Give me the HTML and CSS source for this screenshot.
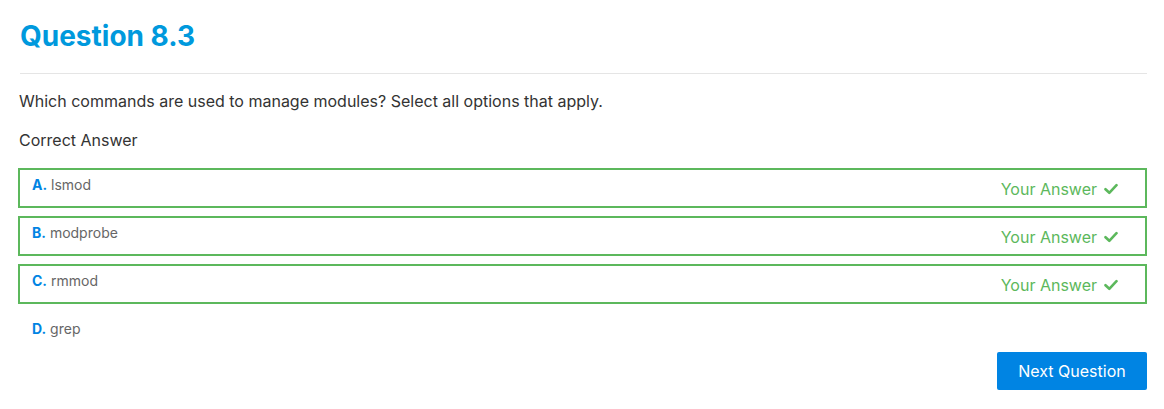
FILE: index.html
```html
<!DOCTYPE html>
<html>
<head>
<meta charset="utf-8">
<link rel="stylesheet" href="styles.css">
</head>
<body>
<div class="page">
  <h1 class="title">Question 8.3</h1>
  <hr class="rule">
  <p class="question">Which commands are used to manage modules? Select all options that apply.</p>
  <p class="correct">Correct Answer</p>
  <ul class="options">
    <li class="option selected">
      <span class="label"><b class="letter">A.</b> lsmod</span>
      <span class="yours">Your Answer <svg class="check" width="14" height="12" viewBox="0 0 14 12"><polyline points="1.5,6.2 5.3,9.8 12.5,2.2" fill="none" stroke="currentColor" stroke-width="2.6" stroke-linecap="round" stroke-linejoin="round"/></svg></span>
    </li>
    <li class="option selected">
      <span class="label"><b class="letter">B.</b> modprobe</span>
      <span class="yours">Your Answer <svg class="check" width="14" height="12" viewBox="0 0 14 12"><polyline points="1.5,6.2 5.3,9.8 12.5,2.2" fill="none" stroke="currentColor" stroke-width="2.6" stroke-linecap="round" stroke-linejoin="round"/></svg></span>
    </li>
    <li class="option selected">
      <span class="label"><b class="letter">C.</b> rmmod</span>
      <span class="yours">Your Answer <svg class="check" width="14" height="12" viewBox="0 0 14 12"><polyline points="1.5,6.2 5.3,9.8 12.5,2.2" fill="none" stroke="currentColor" stroke-width="2.6" stroke-linecap="round" stroke-linejoin="round"/></svg></span>
    </li>
    <li class="option">
      <span class="label"><b class="letter">D.</b> grep</span>
    </li>
  </ul>
  <div class="actions">
    <button class="next">Next Question</button>
  </div>
</div>
</body>
</html>
```

FILE: styles.css
```css
* { box-sizing: border-box; }
html, body { margin: 0; padding: 0; background: #fff; }
body {
  font-family: Inter, "Noto Sans", "Liberation Sans", sans-serif;
  color: #333;
}
.page {
  padding: 19px 17px 0 18px;
}
.title {
  margin: 0 0 0 2px;
  font-size: 28px;
  line-height: 34px;
  font-weight: 700;
  color: #0099dd;
}
.rule {
  margin: 20px 0 0 2px;
  border: 0;
  border-top: 1px solid #e5e5e5;
  height: 0;
}
.question {
  margin: 15px 0 0 1px;
  font-size: 16px;
  line-height: 24px;
}
.correct {
  margin: 15px 0 0 1px;
  font-size: 16px;
  line-height: 24px;
}
.options {
  list-style: none;
  margin: 16px 0 0 0;
  padding: 0;
  display: flex;
  flex-direction: column;
  gap: 8px;
}
.option {
  height: 40px;
  border: 2px solid transparent;
  display: flex;
  justify-content: space-between;
  align-items: flex-start;
  padding: 5px 27px 0 12px;
}
.option.selected { border-color: #5cb85c; }
.label {
  font-size: 14px;
  line-height: 20px;
  color: #666;
}
.letter {
  color: #0084e3;
  font-weight: 700;
}
.yours {
  margin-top: 2px;
  font-size: 16px;
  line-height: 24px;
  color: #5cb85c;
  display: flex;
  align-items: center;
  gap: 7px;
}
.check { display: block; }
.actions {
  display: flex;
  justify-content: flex-end;
}
.next {
  width: 150px;
  height: 38px;
  border: 0;
  border-radius: 2px;
  background: #0084e3;
  color: #fff;
  font-family: inherit;
  font-size: 16px;
  padding: 0;
}
```
